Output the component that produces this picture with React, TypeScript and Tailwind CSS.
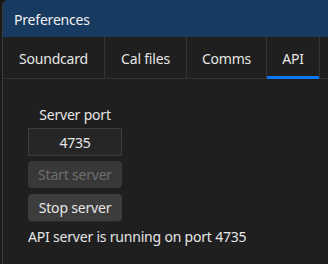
import React from "react";

const font = { fontFamily: '"Noto Sans", "Open Sans", sans-serif', letterSpacing: "-0.2px" };

export default function App() {
  const tabs = [
    { label: "Soundcard", w: "w-[102px]" },
    { label: "Cal files", w: "w-[82px]" },
    { label: "Comms", w: "w-[80px]" },
    { label: "API", w: "w-[53px]", active: true },
  ];
  return (
    <div className="w-[328px] h-[264px] bg-[#1a1a1a] flex overflow-hidden" style={font}>
      <div className="ml-[2px] flex-1 flex flex-col border-l border-[#3a3a3a] bg-[#1f1f1f] rounded-tl-[6px] overflow-hidden">
        <div className="h-[37px] bg-[#163a60] flex items-center pl-[11px] pt-[2px] text-[14px] text-[#f0f0f0]">
          Preferences
        </div>
        <div className="h-[42px] flex border-b border-[#333333]">
          {tabs.map((t) => (
            <div
              key={t.label}
              className={`${t.w} relative flex items-center justify-center pt-[2px] border-r border-[#333333] text-[14px] text-[#e6e6e6]`}
            >
              {t.label}
              {t.active && (
                <div className="absolute left-0 right-0 bottom-[-1px] h-[3px] bg-[#0a78f0]" />
              )}
            </div>
          ))}
        </div>
        <div className="flex flex-col pl-[25px] pt-[26px]">
          <div className="w-[94px] text-center text-[14px] text-[#e6e6e6] leading-[20px] mb-[3px]">
            Server port
          </div>
          <div className="w-[94px] h-[28px] bg-[#262626] border border-[#3c3c3c] flex items-center justify-center text-[14px] text-[#e6e6e6]">
            4735
          </div>
          <div className="mt-[5px] w-[94px] h-[27px] rounded-[4px] bg-[#383838] flex items-center justify-center text-[14px] text-[#6e6e6e]">
            Start server
          </div>
          <div className="mt-[6px] w-[94px] h-[28px] rounded-[4px] bg-[#3d3d3d] border-b border-[#2a2a2a] flex items-center justify-center text-[14px] text-[#e6e6e6]">
            Stop server
          </div>
          <div className="mt-[5px] text-[14px] text-[#e6e6e6] leading-[20px]">
            API server is running on port 4735
          </div>
        </div>
      </div>
    </div>
  );
}
